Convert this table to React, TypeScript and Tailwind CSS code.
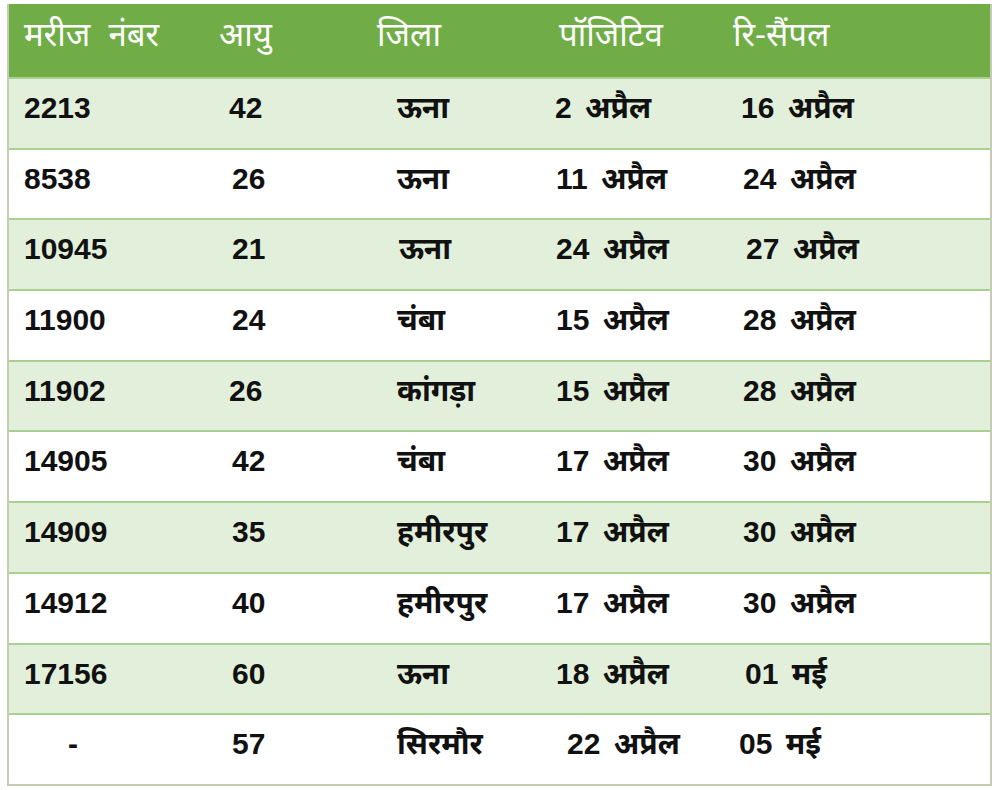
const header = ['मरीज नंबर', 'आयु', 'जिला', 'पॉजिटिव', 'रि-सैंपल'];

type Row = { cells: string[]; shift?: string[] };

const rows: Row[] = [
  { cells: ['2213', '42', 'ऊना', '2 अप्रैल', '16 अप्रैल'], shift: ['', 'pl-[27px]', '', 'pl-[11px]', 'pl-[19px]'] },
  { cells: ['8538', '26', 'ऊना', '11 अप्रैल', '24 अप्रैल'] },
  { cells: ['10945', '21', 'ऊना', '24 अप्रैल', '27 अप्रैल'], shift: ['', '', 'pl-[35px]', '', 'pl-[24px]'] },
  { cells: ['11900', '24', 'चंबा', '15 अप्रैल', '28 अप्रैल'] },
  { cells: ['11902', '26', 'कांगड़ा', '15 अप्रैल', '28 अप्रैल'], shift: ['', 'pl-[27px]', '', '', ''] },
  { cells: ['14905', '42', 'चंबा', '17 अप्रैल', '30 अप्रैल'] },
  { cells: ['14909', '35', 'हमीरपुर', '17 अप्रैल', '30 अप्रैल'] },
  { cells: ['14912', '40', 'हमीरपुर', '17 अप्रैल', '30 अप्रैल'] },
  { cells: ['17156', '60', 'ऊना', '18 अप्रैल', '01 मई'], shift: ['', '', '', '', 'pl-[23px]'] },
  { cells: ['-', '57', 'सिरमौर', '22 अप्रैल', '05 मई'], shift: ['pl-[59px]', '', '', 'pl-[23px]', 'pl-[17px]'] },
];

const basePad = ['pl-[15px]', 'pl-[30px]', 'pl-[33px]', 'pl-[12px]', 'pl-[21px]'];
const headPad = ['pl-[15px]', 'pl-[17px]', 'pl-[13px]', 'pl-[15px]', 'pl-[11px]'];
const cols = 'grid grid-cols-[193px_162px_180px_178px_1fr]';

export default function App() {
  return (
    <div className="w-[998px] h-[790px] bg-white pt-[4px] pl-[7px]" style={{ fontFamily: '"Liberation Sans", "Noto Sans", Arial, sans-serif' }}>
      <div className="w-[985px] border-l-2 border-r-2 border-b-2 border-[#c4cdb2]">
        <div className={`${cols} h-[73px] bg-[#70ad47] text-white text-[33px] [word-spacing:9px]`}>
          {header.map((h, i) => (
            <div key={i} className={`${headPad[i]} pt-[11px] leading-[40px] whitespace-nowrap`}>{h}</div>
          ))}
        </div>
        {rows.map((r, ri) => (
          <div
            key={ri}
            className={`${cols} h-[70.7px] border-t-2 border-[#a9d08e] font-bold text-[30px] text-[#111] [word-spacing:5px] ${ri % 2 === 0 ? 'bg-[#e2efda]' : 'bg-white'}`}
          >
            {r.cells.map((c, ci) => (
              <div key={ci} className={`${r.shift && r.shift[ci] ? r.shift[ci] : basePad[ci]} pt-[11px] leading-[36px] whitespace-nowrap`}>
                {c}
              </div>
            ))}
          </div>
        ))}
      </div>
    </div>
  );
}
